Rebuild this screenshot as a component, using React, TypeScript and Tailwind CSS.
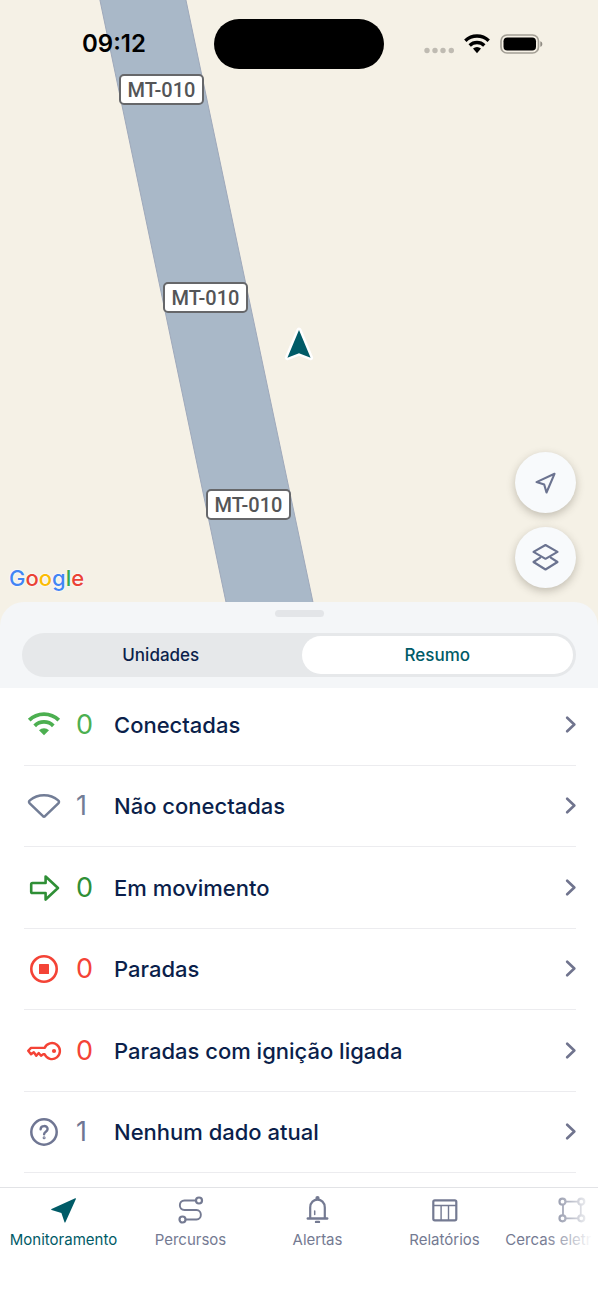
import type { ReactNode } from "react";

const shields = [
  { id: "north", place: "left-[119px] top-[74px]" },
  { id: "middle", place: "left-[163px] top-[282px]" },
  { id: "south", place: "left-[206px] top-[489px]" },
];

function StatusBar() {
  return (
    <div className="absolute inset-x-0 top-[19px] grid grid-cols-[1fr_170px_1fr] items-center">
      <div className="pl-[14px] text-center text-[24px] leading-[50px] font-semibold text-black">09:12</div>
      <div className="h-[50px] rounded-full bg-black" />
      <div className="flex items-center justify-center pr-4">
        <svg width="119" height="24" viewBox="0 0 119 24" aria-hidden="true">
          <g fill="#bfbbb2">
            <circle cx="3" cy="18.500" r="2.700" />
            <circle cx="11" cy="18.500" r="2.700" />
            <circle cx="19" cy="18.500" r="2.700" />
            <circle cx="27.300" cy="18.500" r="2.700" />
          </g>
          <g fill="none" stroke="#000" strokeWidth="3.400">
            <path d="M41.300 8.700a17 17 0 0 1 23.400 0" />
            <path d="M45.700 13.400a10.600 10.600 0 0 1 14.600 0" />
          </g>
          <path d="M49 16.600a6 6 0 0 1 8 0L53 21.200z" fill="#000" />
          <rect x="77" y="3" width="37.500" height="18" rx="6" fill="#f6f1e6" stroke="#a39f95" strokeWidth="1.700" />
          <rect x="79.500" y="5.500" width="32.500" height="13" rx="3.800" fill="#000" />
          <path d="M116.300 9.200c2.700.7 2.700 4.900 0 5.600z" fill="#8f8b83" />
        </svg>
      </div>
    </div>
  );
}

function MapButton({ label, children }: { label: string; children: ReactNode }) {
  return (
    <button
      type="button"
      aria-label={label}
      className="flex size-[61px] items-center justify-center rounded-full bg-[#f8fafc] shadow-[0_3px_8px_rgba(60,55,40,0.28)]"
    >
      {children}
    </button>
  );
}

function MapView() {
  return (
    <section aria-label="Mapa" className="relative h-[626px] overflow-hidden bg-[#f5f1e6]">
      <svg width="598" height="626" viewBox="0 0 598 626" className="absolute top-0 left-0" aria-hidden="true">
        <path d="M99.500 -2L231 626H318L185.500 -2z" fill="#a9b8c8" stroke="#9fa9bb" strokeWidth="1" />
      </svg>
      {shields.map((shield) => (
        <span
          key={shield.id}
          className={`absolute flex h-[31px] w-[85px] items-center justify-center rounded-[5px] border-2 border-[#66676a] bg-white pt-px font-['Roboto'] text-[20px] font-medium text-[#545557] ${shield.place}`}
        >
          MT-010
        </span>
      ))}
      <svg width="30" height="34" viewBox="0 0 30 34" className="absolute top-[327px] left-[284px]" aria-hidden="true">
        <path d="M15 3L26.600 30.700L15 26.200L3.400 30.700z" fill="#005b67" stroke="#fff" strokeWidth="5" strokeLinejoin="round" paintOrder="stroke" />
      </svg>
      <StatusBar />
      <div className="absolute right-[22px] bottom-[38px] flex flex-col gap-[14px]">
        <MapButton label="Minha localização">
          <svg width="24" height="24" viewBox="0 0 24 24" fill="none" stroke="#6b7390" strokeWidth="2.100" strokeLinejoin="round" aria-hidden="true">
            <path d="M20.500 2.800L2.500 11.100L10.200 13.500L12.500 21.500z" />
          </svg>
        </MapButton>
        <MapButton label="Camadas do mapa">
          <svg width="30" height="30" viewBox="0 0 30 30" fill="none" stroke="#6b7390" strokeWidth="2.100" strokeLinejoin="round" strokeLinecap="round" aria-hidden="true">
            <path d="M14.500 2L26.500 8.900L14.500 15.800L2.500 8.900z" />
            <path d="M9.300 14.600L2.500 19L14.500 26.500L26.500 19L19.700 14.600" />
          </svg>
        </MapButton>
      </div>
      <div className="absolute bottom-[33px] left-[9px] text-[22px] leading-[30px] font-medium [text-shadow:0_0_2px_#fff,0_0_2px_#fff]">
        <span className="text-[#4285f4]">G</span>
        <span className="text-[#ea4335]">o</span>
        <span className="text-[#fbbc05]">o</span>
        <span className="text-[#4285f4]">g</span>
        <span className="text-[#34a853]">l</span>
        <span className="text-[#ea4335]">e</span>
      </div>
    </section>
  );
}

const icons = {
  connected: (
    <g>
      <g fill="none" stroke="currentColor" strokeWidth="3.800">
        <path d="M3.200 13.200a21 21 0 0 1 29.600 0" />
        <path d="M8.700 18.800a13.200 13.200 0 0 1 18.600 0" />
      </g>
      <path d="M13 23.300a7.200 7.200 0 0 1 10 0L18 28.300z" fill="currentColor" />
    </g>
  ),
  disconnected: (
    <path d="M17 28.200L3.700 15.400C2.700 14.400 2.800 13.200 3.800 12.400C12 5.500 24 5.500 32.200 12.400C33.200 13.200 33.300 14.400 32.300 15.400L19 28.200Q18 29.100 17 28.200z" fill="none" stroke="currentColor" strokeWidth="2.500" strokeLinejoin="round" />
  ),
  moving: (
    <path d="M6.500 13H19.600V6.500L32 18L19.600 29.500V23H6.500Q5.200 23 5.200 21.700V14.300Q5.200 13 6.500 13z" fill="none" stroke="currentColor" strokeWidth="2.600" strokeLinejoin="round" />
  ),
  stopped: (
    <g>
      <circle cx="18" cy="18" r="12.700" fill="none" stroke="currentColor" strokeWidth="2.600" />
      <rect x="13" y="13" width="10" height="10" rx=".6" fill="currentColor" />
    </g>
  ),
  ignition: (
    <g>
      <path d="M18.600 21.300A8 8 0 1 0 18.600 14.900H5L2.200 17.800L5 21.300L7.800 19.200L10.300 22.700L12.700 20L15 22.700L17.200 21.200z" fill="none" stroke="currentColor" strokeWidth="2.400" strokeLinejoin="round" />
      <circle cx="28" cy="18" r="2.100" fill="currentColor" />
    </g>
  ),
  unknown: (
    <g fill="none" stroke="currentColor" strokeLinecap="round">
      <circle cx="18" cy="18" r="12.700" strokeWidth="2.500" />
      <path d="M14.600 15.200C14.700 11.100 21.600 11 21.600 15.100C21.600 17.800 18.100 17.700 18.100 20.300" strokeWidth="2.400" />
      <circle cx="18.100" cy="23.700" r=".5" strokeWidth="2" />
    </g>
  ),
};

const summary = [
  { label: "Conectadas", count: 0, icon: icons.connected, color: "text-[#4caf50]" },
  { label: "Não conectadas", count: 1, icon: icons.disconnected, color: "text-[#727d96]" },
  { label: "Em movimento", count: 0, icon: icons.moving, color: "text-[#2f8f36]" },
  { label: "Paradas", count: 0, icon: icons.stopped, color: "text-[#f44336]" },
  { label: "Paradas com ignição ligada", count: 0, icon: icons.ignition, color: "text-[#f44336]" },
  { label: "Nenhum dado atual", count: 1, icon: icons.unknown, color: "text-[#6f7693]" },
];

function SummaryList() {
  return (
    <ul className="-mt-1 ml-6 mr-[22px] grid h-[489px] auto-rows-fr">
      {summary.map((row) => (
        <li key={row.label} className="border-b border-[#ececef]">
          <button type="button" className="flex h-full w-full items-center pt-px text-left">
            <span className={`flex items-center ${row.color}`}>
              <svg width="36" height="36" viewBox="0 0 36 36" className="ml-[2px]" aria-hidden="true">
                {row.icon}
              </svg>
              <span className="ml-[14px] w-[38px] text-[27px] leading-8">{row.count}</span>
            </span>
            <span className="flex-1 text-[22px] leading-8 font-medium text-[#0b1f4b]">{row.label}</span>
            <svg width="12" height="18" viewBox="0 0 12 18" fill="none" stroke="#70748e" strokeWidth="2.600" strokeLinecap="round" strokeLinejoin="round" aria-hidden="true">
              <path d="M3.200 1.700L10.300 8.500L3.200 15.300" />
            </svg>
          </button>
        </li>
      ))}
    </ul>
  );
}

const tabs = [
  {
    label: "Monitoramento",
    icon: <path d="M26.200 2.300L2.500 12.900Q1.600 13.500 2.600 13.900L12.400 16.900L15.500 26.300Q16 27.100 16.400 26.300L26.900 3Q27.100 2 26.200 2.300z" fill="currentColor" />,
  },
  {
    label: "Percursos",
    icon: (
      <g fill="none" stroke="currentColor" strokeWidth="1.900">
        <circle cx="23" cy="4.500" r="3" strokeWidth="2.200" />
        <circle cx="6.500" cy="23.500" r="3" strokeWidth="2.200" />
        <path d="M20 4.500H8.500C2.300 4.500 2.300 14 8.500 14H20.500C26.300 14 26.300 23.500 20.500 23.500H9.500" />
      </g>
    ),
  },
  {
    label: "Alertas",
    icon: (
      <g fill="none" stroke="currentColor" strokeWidth="1.900" strokeLinecap="round">
        <path d="M4.800 22.500H24.200" strokeWidth="2.400" />
        <path d="M7.200 22V11.500C7.200 1 21.800 1 21.800 11.500V22" strokeWidth="2.200" />
        <path d="M11.700 15V18.600" strokeWidth="1.500" />
        <circle cx="14.500" cy="2.200" r="1.200" fill="currentColor" />
        <path d="M13 25.900H16" strokeWidth="2.400" />
      </g>
    ),
  },
  {
    label: "Relatórios",
    icon: (
      <g fill="none" stroke="currentColor" strokeWidth="1.400">
        <rect x="3.300" y="4.300" width="23" height="20" rx="1.500" strokeWidth="2.200" />
        <path d="M3.500 9.500H26M11.100 9.500V24.300M18.500 9.500V24.300" />
      </g>
    ),
  },
  {
    label: "Cercas eletrônicas",
    icon: (
      <g fill="none" stroke="currentColor" strokeWidth="1.800">
        <circle cx="5.500" cy="5.700" r="3" strokeWidth="2.200" />
        <circle cx="24.300" cy="5.700" r="3" strokeWidth="2.200" />
        <circle cx="5.500" cy="22.300" r="3" strokeWidth="2.200" />
        <circle cx="24.300" cy="22.300" r="3" strokeWidth="2.200" />
        <path d="M8.500 5.700H21.300M8.500 22.300H21.300M6 8.700V19.300M23.800 8.700V19.300" />
      </g>
    ),
  },
];

function TabBar() {
  return (
    <nav aria-label="Principal" className="relative mt-[14px] overflow-hidden border-t border-[#e2e3e6] pt-2 pb-[50px]">
      <div className="flex">
        {tabs.map((tab, index) => (
          <a
            key={tab.label}
            href="#"
            aria-current={index === 0 ? "page" : undefined}
            className={`flex w-[127px] shrink-0 flex-col items-center gap-[5px] ${index === 0 ? "text-[#005b67]" : "text-[#747a92]"}`}
          >
            <svg width="29" height="29" viewBox="0 0 29 29" aria-hidden="true">
              {tab.icon}
            </svg>
            <span className="text-[15px] leading-5 whitespace-nowrap">{tab.label}</span>
          </a>
        ))}
      </div>
      <div className="pointer-events-none absolute -top-px right-0 bottom-0 w-14 bg-linear-to-r from-transparent via-white/50 to-white to-90%" />
    </nav>
  );
}

export default function App() {
  return (
    <main className="min-h-screen bg-white font-['Inter',sans-serif]">
      <MapView />
      <section className="relative -mt-6">
        <header className="rounded-t-[24px] bg-[#f4f6f8] px-[22px] pt-2 pb-[11px]">
          <div className="mx-auto h-[7px] w-[49px] rounded-full bg-[#e3e5e8]" />
          <div role="tablist" className="mt-4 grid h-11 grid-cols-2 gap-[5px] rounded-full bg-[#e6e8ea] p-[3px]">
            <button type="button" role="tab" aria-selected="false" className="rounded-full pt-[2px] text-[17px] font-medium text-[#0b1f4b]">
              Unidades
            </button>
            <button type="button" role="tab" aria-selected="true" className="rounded-full bg-white pt-[2px] text-[17px] font-medium text-[#005b67]">
              Resumo
            </button>
          </div>
        </header>
        <SummaryList />
      </section>
      <TabBar />
    </main>
  );
}
